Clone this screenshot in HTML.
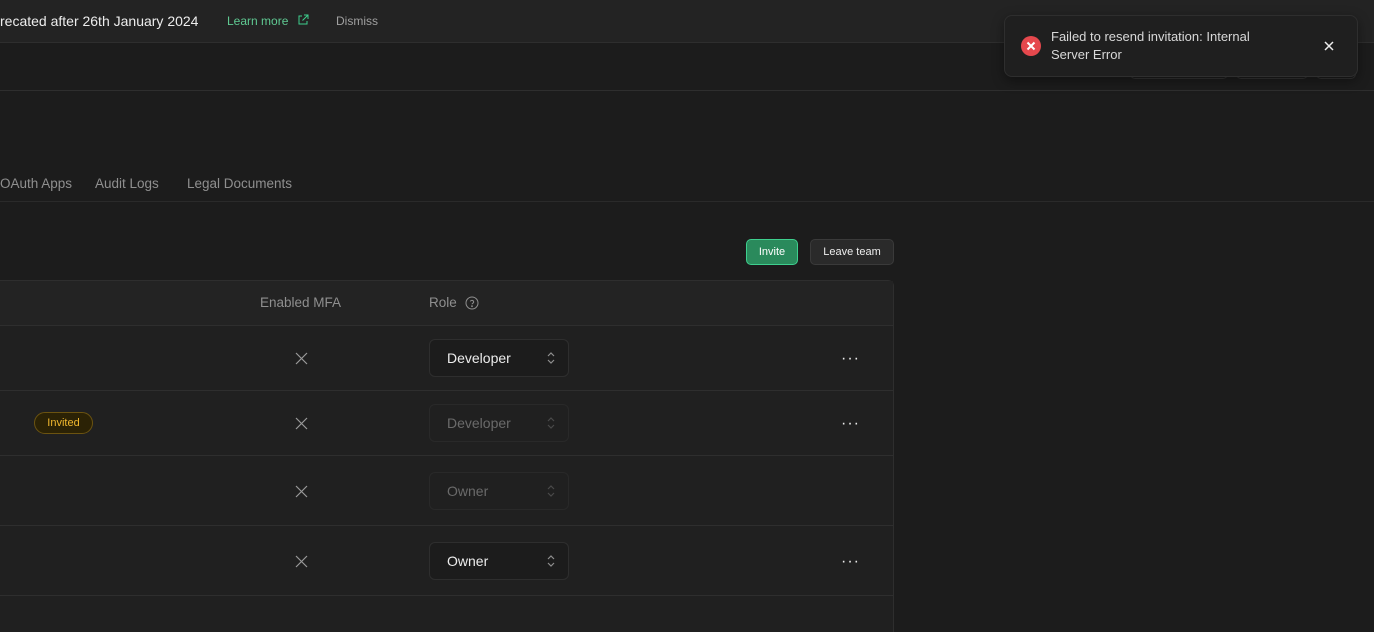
<!DOCTYPE html>
<html><head><style>
*{margin:0;padding:0;box-sizing:border-box}
html,body{width:1374px;height:632px;overflow:hidden}
body{background:#1c1c1c;font-family:"Liberation Sans",sans-serif;position:relative;color:#ededed}
.a{position:absolute;white-space:nowrap}
.sel{position:absolute;left:429px;width:140px;height:38px;border:1px solid #2e2e2e;border-radius:6px;background:#1c1c1c;font-size:14px;padding-left:17px;line-height:36px}
.sel svg{position:absolute;right:12px;top:10px}
.x{position:absolute;left:295px}
.dots{position:absolute;left:841px;font-size:16px;letter-spacing:1px;color:#ededed}
.hl{position:absolute;left:0;width:893px;height:1px;background:#2e2e2e}
</style></head><body>
<div class="a" style="left:0;top:0;width:1374px;height:43px;background:#232323;border-bottom:1px solid #2e2e2e"></div>
<div class="a" style="left:0;top:13px;font-size:14px;color:#ededed">recated after 26th January 2024</div>
<div class="a" style="left:227px;top:14px;font-size:12px;color:#5fc992">Learn more</div>
<svg class="a" style="left:297px;top:14px" width="12" height="12" viewBox="0 0 12 12" fill="none" stroke="#3ecf8e" stroke-width="1"><path d="M5 2H2v8h8V7M7 1h4v4M11 1L5.5 6.5"/></svg>
<div class="a" style="left:336px;top:14px;font-size:12px;color:#a0a0a0">Dismiss</div>
<div class="a" style="left:0;top:90px;width:1374px;height:1px;background:#2e2e2e"></div>
<div class="a" style="left:1130px;top:66px;width:98px;height:13px;border:1px solid #333;border-top:none;border-radius:0 0 5px 5px"></div>
<div class="a" style="left:1236px;top:66px;width:72px;height:13px;border:1px solid #333;border-top:none;border-radius:0 0 5px 5px"></div>
<div class="a" style="left:1316px;top:66px;width:40px;height:13px;border:1px solid #333;border-top:none;border-radius:0 0 5px 5px"></div>
<div class="a" style="left:0;top:176px;font-size:13.5px;color:#8f8f8f">OAuth Apps</div>
<div class="a" style="left:95px;top:176px;font-size:13.5px;color:#8f8f8f">Audit Logs</div>
<div class="a" style="left:187px;top:176px;font-size:13.5px;color:#8f8f8f">Legal Documents</div>
<div class="a" style="left:0;top:201px;width:1374px;height:1px;background:#2a2a2a"></div>

<div class="a" style="left:746px;top:239px;width:52px;height:26px;background:#2a8a5c;border:1px solid #3ecf8e;border-radius:5px;font-size:11px;text-align:center;line-height:24px;color:#fff">Invite</div>
<div class="a" style="left:810px;top:239px;width:84px;height:26px;background:#2a2a2a;border:1px solid #3a3a3a;border-radius:5px;font-size:11px;text-align:center;line-height:24px;color:#ededed">Leave team</div>

<div class="a" style="left:-10px;top:280px;width:904px;height:352px;background:#202020;border:1px solid #2e2e2e;border-bottom:none;border-radius:6px 6px 0 0"></div>
<div class="a" style="left:0;top:281px;width:893px;height:44px;background:#232323"></div>
<div class="a" style="left:260px;top:295px;font-size:13.5px;color:#8f8f8f">Enabled MFA</div>
<div class="a" style="left:429px;top:295px;font-size:13.5px;color:#8f8f8f">Role</div>
<svg class="a" style="left:465px;top:296px" width="14" height="14" viewBox="0 0 14 14" fill="none" stroke="#8f8f8f" stroke-width="1"><circle cx="7" cy="7" r="6"/><path d="M5.3 5.4a1.8 1.8 0 013.4.6c0 1.2-1.7 1.4-1.7 2.3"/><circle cx="7" cy="10.2" r=".4" fill="#8f8f8f"/></svg>
<div class="hl" style="top:325px"></div>
<div class="hl" style="top:390px"></div>
<div class="hl" style="top:455px"></div>
<div class="hl" style="top:525px"></div>
<div class="hl" style="top:595px"></div>

<svg class="x" style="top:352px" width="13" height="13" viewBox="0 0 13 13" stroke="#9a9a9a" stroke-width="1.2"><path d="M1 1l11 11M12 1L1 12"/></svg>
<svg class="x" style="top:417px" width="13" height="13" viewBox="0 0 13 13" stroke="#9a9a9a" stroke-width="1.2"><path d="M1 1l11 11M12 1L1 12"/></svg>
<svg class="x" style="top:485px" width="13" height="13" viewBox="0 0 13 13" stroke="#9a9a9a" stroke-width="1.2"><path d="M1 1l11 11M12 1L1 12"/></svg>
<svg class="x" style="top:555px" width="13" height="13" viewBox="0 0 13 13" stroke="#9a9a9a" stroke-width="1.2"><path d="M1 1l11 11M12 1L1 12"/></svg>

<div class="a" style="left:34px;top:412px;width:59px;height:22px;border:1px solid #6b5310;background:#2b2205;border-radius:11px;font-size:11px;color:#f1b82e;text-align:center;line-height:20px">Invited</div>

<div class="sel" style="top:339px;color:#ededed">Developer<svg width="10" height="16" viewBox="0 0 10 16" fill="none" stroke="#8f8f8f" stroke-width="1.2"><path d="M2 6l3-3 3 3M2 10l3 3 3-3"/></svg></div>
<div class="sel" style="top:404px;color:#6a6a6a;background:#202020;border-color:#292929">Developer<svg width="10" height="16" viewBox="0 0 10 16" fill="none" stroke="#4a4a4a" stroke-width="1.2"><path d="M2 6l3-3 3 3M2 10l3 3 3-3"/></svg></div>
<div class="sel" style="top:472px;color:#6a6a6a;background:#202020;border-color:#292929">Owner<svg width="10" height="16" viewBox="0 0 10 16" fill="none" stroke="#4a4a4a" stroke-width="1.2"><path d="M2 6l3-3 3 3M2 10l3 3 3-3"/></svg></div>
<div class="sel" style="top:542px;color:#ededed">Owner<svg width="10" height="16" viewBox="0 0 10 16" fill="none" stroke="#8f8f8f" stroke-width="1.2"><path d="M2 6l3-3 3 3M2 10l3 3 3-3"/></svg></div>

<div class="dots" style="top:350px">···</div>
<div class="dots" style="top:415px">···</div>
<div class="dots" style="top:553px">···</div>

<div class="a" style="left:1004px;top:15px;width:354px;height:62px;background:#1f1f1f;border:1px solid #2e2e2e;border-radius:8px;box-shadow:0 4px 12px rgba(0,0,0,.4)"></div>
<svg class="a" style="left:1021px;top:36px" width="20" height="20" viewBox="0 0 20 20"><circle cx="10" cy="10" r="10" fill="#e5484d"/><path d="M6.5 6.5l7 7M13.5 6.5l-7 7" stroke="#fff" stroke-width="2"/></svg>
<div class="a" style="left:1051px;top:28px;font-size:13px;line-height:18px;color:#d8d8d8">Failed to resend invitation: Internal<br>Server Error</div>
<svg class="a" style="left:1324px;top:41px" width="10" height="10" viewBox="0 0 10 10" stroke="#ededed" stroke-width="1.5"><path d="M1 1l8 8M9 1L1 9"/></svg>
</body></html>
